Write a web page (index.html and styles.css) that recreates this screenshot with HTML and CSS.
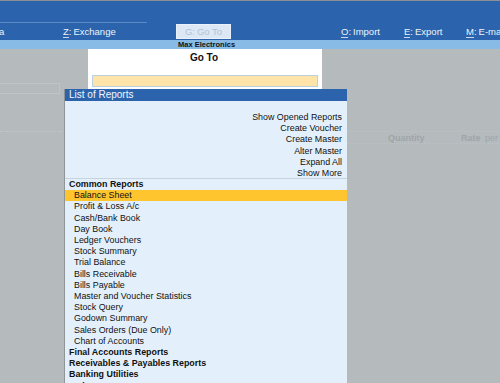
FILE: index.html
```html
<!DOCTYPE html>
<html>
<head>
<meta charset="utf-8">
<link rel="stylesheet" href="styles.css">
</head>
<body>
<div class="app">
  <header class="topbar">
    <div class="topline"></div>
    <nav class="menu">
      <span class="mi mi-a">a</span>
      <span class="mi mi-z"><u>Z</u>:<span class="gap"></span>Exchange</span>
      <span class="mi mi-g">G:<span class="gap"></span>Go To</span>
      <span class="mi mi-o"><u>O</u>:<span class="gap"></span>Import</span>
      <span class="mi mi-e"><u>E</u>:<span class="gap"></span>Export</span>
      <span class="mi mi-m"><u>M</u>:<span class="gap"></span>E-mail</span>
    </nav>
  </header>
  <div class="subbar"><span class="company">Max Electronics</span></div>
  <main class="workspace">
    <div class="bg-box"></div>
    <div class="bg-line"></div>
    <div class="bg-cols"><span class="q">Quantity</span><span class="r">Rate</span><span class="p">per</span></div>

    <section class="goto">
      <div class="goto-title">Go To</div>
      <div class="goto-input"></div>
    </section>

    <section class="reports">
      <div class="rep-head">List of Reports</div>
      <div class="rep-actions">
        <div>Show Opened Reports</div>
        <div>Create Voucher</div>
        <div>Create Master</div>
        <div>Alter Master</div>
        <div>Expand All</div>
        <div>Show More</div>
      </div>
      <div class="rep-list">
        <div class="grp">Common Reports</div>
        <div class="it sel">Balance Sheet</div>
        <div class="it">Profit &amp; Loss A/c</div>
        <div class="it">Cash/Bank Book</div>
        <div class="it">Day Book</div>
        <div class="it">Ledger Vouchers</div>
        <div class="it">Stock Summary</div>
        <div class="it">Trial Balance</div>
        <div class="it">Bills Receivable</div>
        <div class="it">Bills Payable</div>
        <div class="it">Master and Voucher Statistics</div>
        <div class="it">Stock Query</div>
        <div class="it">Godown Summary</div>
        <div class="it">Sales Orders (Due Only)</div>
        <div class="it">Chart of Accounts</div>
        <div class="grp">Final Accounts Reports</div>
        <div class="grp">Receivables &amp; Payables Reports</div>
        <div class="grp">Banking Utilities</div>
        <div class="grp">Ledger Reports</div>
      </div>
    </section>
  </main>
</div>
</body>
</html>
```
FILE: styles.css
```css
* { box-sizing: border-box; }
html, body { margin: 0; padding: 0; }
body {
  width: 500px;
  height: 383px;
  overflow: hidden;
  font-family: "Liberation Sans", Arial, sans-serif;
  font-size: 9px;
  background: #b5bbbd;
}
.app { width: 500px; height: 383px; display: flex; flex-direction: column; }

.topbar {
  height: 40px;
  background: #2b64ad;
  border-top: 1px solid #8c9096;
  position: relative;
}
.topline {
  position: absolute;
  left: 0; top: 21px;
  width: 147px; height: 1px;
  background: #5d8ac4;
}
.menu {
  position: absolute;
  left: 0; top: 23px;
  width: 500px; height: 15px;
  color: #eef3fa;
  font-size: 9.5px;
  white-space: nowrap;
}
.gap { display: inline-block; width: 2px; }
.mi { position: absolute; top: 2px; }
.mi u { text-decoration: none; border-bottom: 1px solid #c8d8ee; }
.mi-a { left: -1px; }
.mi-z { left: 63px; }
.mi-g {
  left: 176px; top: 0;
  width: 55px; height: 15px;
  line-height: 14px;
  text-align: center;
  background: #dce8f5;
  color: #b2c2d4;
  border: 1px solid #eaf1fa;
}
.mi-o { left: 341px; }
.mi-e { left: 404px; }
.mi-m { left: 466px; }

.subbar {
  height: 9px;
  background: #88bbe5;
  position: relative;
}
.company {
  position: absolute;
  left: 178px; top: 0;
  font-size: 7.5px;
  font-weight: bold;
  line-height: 9px;
  color: #111;
}

.workspace { flex: 1; position: relative; }
.bg-box {
  position: absolute; left: -2px; top: 34px;
  width: 62px; height: 11px;
  border: 1px solid #bfc5c7;
}
.bg-line {
  position: absolute; left: 0; top: 82px;
  width: 62px; border-top: 1px dotted #c3c8ca;
}
.bg-cols {
  position: absolute; left: 347px; top: 82px;
  width: 160px; height: 13px;
  border-top: 1px dotted #bcc2c4;
  border-bottom: 1px dotted #bcc2c4;
  color: #9ea5a9;
  font-weight: bold;
  font-size: 9px;
}
.bg-cols .q { position: absolute; left: 41px; top: 1px; }
.bg-cols .r { position: absolute; left: 114px; top: 1px; }
.bg-cols .p { position: absolute; left: 138px; top: 1px; font-weight: normal; }

.goto {
  position: absolute;
  left: 88px; top: 0;
  width: 234px; height: 40px;
  background: #ffffff;
  padding-top: 3px;
}
.goto-title {
  text-align: center;
  font-weight: bold;
  font-size: 10px;
  color: #111;
  margin-left: -2px;
}
.goto-input {
  position: absolute;
  left: 4px; top: 26px;
  width: 226px; height: 12px;
  background: #ffe4aa;
  border: 1px solid #b9d1e2;
}

.reports {
  position: absolute;
  left: 64px; top: 40px;
  width: 283px; height: 300px;
  background: #e3f0fb;
  border-left: 1px solid #8f9597;
}
.rep-head {
  height: 12px;
  background: #2b64ad;
  color: #f2f6fb;
  font-size: 10px;
  line-height: 12px;
  padding-left: 4px;
}
.rep-actions {
  text-align: right;
  padding: 11px 5px 0 0;
  line-height: 11.2px;
  color: #111;
  height: 78px;
  border-bottom: 1px solid #c7d4de;
  font-size: 8.9px;
}
.rep-list {
  padding-top: 0;
  line-height: 11.2px;
  color: #111;
  font-size: 8.9px;
}
.grp { font-weight: bold; padding-left: 4px; }
.it { padding-left: 9px; }
.it.sel { background: #ffc52f; }
```
